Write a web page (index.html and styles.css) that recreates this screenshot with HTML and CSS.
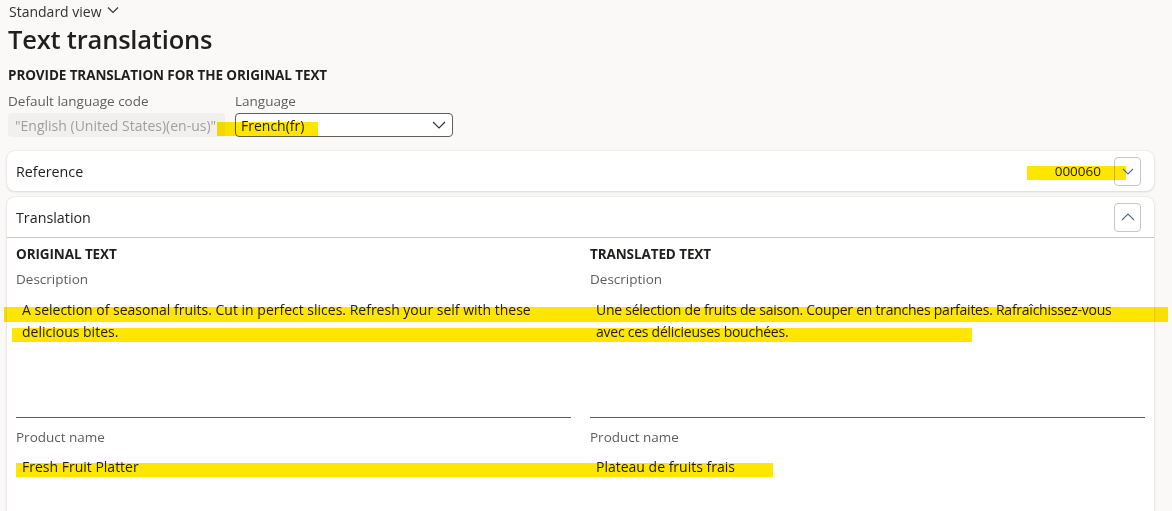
FILE: index.html
```html
<!DOCTYPE html>
<html lang="en">
<head>
<meta charset="utf-8">
<title>Text translations</title>
<link rel="stylesheet" href="styles.css">
</head>
<body>
<div class="page">
  <div class="viewbar">
    <span>Standard view</span>
    <svg class="chev" width="12" height="8" viewBox="0 0 12 8"><path d="M1 1.5 L6 6.5 L11 1.5" fill="none" stroke="#323130" stroke-width="1.1"/></svg>
  </div>
  <h1 class="title">Text translations</h1>
  <div class="section-label">PROVIDE TRANSLATION FOR THE ORIGINAL TEXT</div>
  <div class="fields">
    <div class="field">
      <div class="label">Default language code</div>
      <div class="input disabled">"English (United States)(en-us)"</div>
    </div>
    <div class="field">
      <div class="label">Language</div>
      <div class="input select">
        <span>French(fr)</span>
        <svg width="14" height="8" viewBox="0 0 14 8"><path d="M1 1 L7 7 L13 1" fill="none" stroke="#323130" stroke-width="1.1"/></svg>
      </div>
    </div>
  </div>

  <div class="card ref-card">
    <div class="card-head">
      <span class="card-title">Reference</span>
      <div class="head-right">
        <span class="ref-num">000060</span>
        <button class="icon-btn" aria-label="Expand">
          <svg width="12" height="7" viewBox="0 0 12 7"><path d="M1 1 L6 6 L11 1" fill="none" stroke="#5a6b7e" stroke-width="1.1"/></svg>
        </button>
      </div>
    </div>
  </div>

  <div class="card tr-card">
    <div class="card-head bordered">
      <span class="card-title">Translation</span>
      <button class="icon-btn" aria-label="Collapse">
        <svg width="14" height="8" viewBox="0 0 14 8"><path d="M1 7 L7 1 L13 7" fill="none" stroke="#5a6b7e" stroke-width="1.1"/></svg>
      </button>
    </div>
    <div class="cols">
      <div class="col">
        <div class="col-title">ORIGINAL TEXT</div>
        <div class="label">Description</div>
        <div class="textarea">A selection of seasonal fruits. Cut in perfect slices. Refresh your self with these delicious bites.</div>
        <div class="label">Product name</div>
        <div class="value">Fresh Fruit Platter</div>
      </div>
      <div class="col">
        <div class="col-title">TRANSLATED TEXT</div>
        <div class="label">Description</div>
        <div class="textarea tight">Une sélection de fruits de saison. Couper en tranches parfaites. Rafraîchissez-vous avec ces délicieuses bouchées.</div>
        <div class="label">Product name</div>
        <div class="value">Plateau de fruits frais</div>
      </div>
    </div>
  </div>
</div>

<div class="hl hl-lang"></div>
<div class="hl hl-ref"></div>
<div class="hl hl-d1"></div>
<div class="hl hl-d2"></div>
<div class="hl hl-pn"></div>
</body>
</html>
```

FILE: styles.css
```css
* { box-sizing: border-box; }
html, body { margin: 0; padding: 0; }
body {
  width: 1172px;
  height: 511px;
  overflow: hidden;
  background: #faf9f8;
  font-family: "Open Sans", "Noto Sans", sans-serif;
  color: #201f1e;
  position: relative;
}
.page {
  padding: 2px 18px 0 7px;
}
.viewbar {
  display: flex;
  align-items: center;
  gap: 5px;
  padding-left: 2px;
  font-size: 14px;
  line-height: 20px;
  color: #323130;
}
.viewbar .chev { margin-top: -4px; }
.title {
  margin: 0;
  padding-left: 1px;
  font-size: 25.5px;
  font-weight: 600;
  line-height: 34px;
  letter-spacing: -0.2px;
  color: #201f1e;
}
.section-label {
  margin-top: 10px;
  padding-left: 1px;
  font-size: 13.5px;
  font-weight: 700;
  line-height: 18px;
  letter-spacing: -0.1px;
}
.fields {
  display: flex;
  gap: 10px;
  margin-top: 9px;
  padding-left: 1px;
}
.field { display: flex; flex-direction: column; }
.label {
  font-size: 13.5px;
  line-height: 17px;
  color: #605e5c;
  font-weight: 500;
}
.fields .label { margin-bottom: 3px; }
.input {
  height: 24px;
  font-size: 14px;
  display: flex;
  align-items: center;
  border-radius: 4px;
}
.input.disabled {
  width: 217px;
  background: #f1f0ef;
  color: #a19f9d;
  padding-left: 7px;
  white-space: nowrap;
  overflow: hidden;
}
.input.select {
  width: 218px;
  background: #fff;
  border: 1px solid #605e5c;
  padding: 0 6px 0 5px;
  justify-content: space-between;
  color: #201f1e;
}
.card {
  background: #fff;
  border-radius: 8px;
  box-shadow: 0 0 2px rgba(0,0,0,0.12), 0 1px 3px rgba(0,0,0,0.10);
}
.ref-card { margin-top: 14px; }
.tr-card {
  margin-top: 6px;
  height: 330px;
  border-radius: 8px 8px 0 0;
}
.card-head {
  height: 40px;
  display: flex;
  align-items: center;
  justify-content: space-between;
  padding: 0 13px 0 9px;
}
.card-head.bordered {
  height: 41px;
  border-bottom: 1px solid #c8c6c4;
}
.card-title {
  font-size: 14.3px;
  color: #201f1e;
}
.head-right { display: flex; align-items: center; gap: 13px; }
.ref-num { font-size: 13.5px; color: #201f1e; }
.icon-btn {
  width: 27px;
  height: 29px;
  border: 1px solid #c8c6c4;
  border-radius: 4px;
  background: #fff;
  display: flex;
  align-items: center;
  justify-content: center;
  padding: 0;
}
.cols {
  display: grid;
  grid-template-columns: 555px 555px;
  column-gap: 19px;
  padding: 0 8px 0 9px;
}
.col-title {
  margin-top: 7px;
  font-size: 13.5px;
  font-weight: 700;
  line-height: 18px;
  letter-spacing: -0.1px;
}
.col .label { margin-top: 8px; }
.textarea {
  height: 126px;
  margin-top: 4px;
  padding: 7px 6px;
  font-size: 14px;
  line-height: 22px;
  color: #201f1e;
  border-bottom: 1px solid #605e5c;
}
.textarea.tight { letter-spacing: -0.25px; padding-right: 2px; }
.col .textarea + .label { margin-top: 11px; }
.value {
  margin-top: 11px;
  padding-left: 6px;
  font-size: 14px;
  line-height: 20px;
}
.hl {
  position: absolute;
  background: #ffe600;
  mix-blend-mode: multiply;
}
.hl-lang { left: 217px; top: 122px; width: 101px; height: 14px; }
.hl-ref { left: 1027px; top: 166px; width: 99px; height: 14px; }
.hl-d1 { left: 4px; top: 307px; width: 1164px; height: 15px; }
.hl-d2 { left: 12px; top: 328px; width: 960px; height: 14px; }
.hl-pn { left: 16px; top: 463px; width: 757px; height: 14px; }
```
